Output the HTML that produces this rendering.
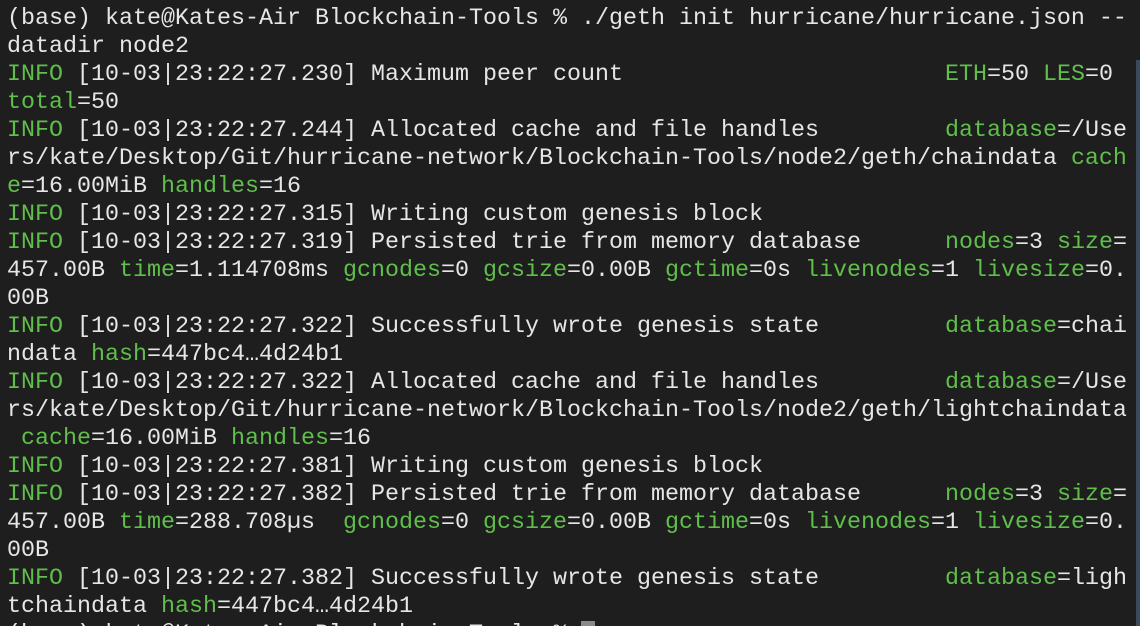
<!DOCTYPE html>
<html><head><meta charset="utf-8"><style>
html,body{margin:0;padding:0;background:#1e1e1e;width:1140px;height:626px;overflow:hidden;position:relative}
pre{margin:0;position:absolute;left:7px;top:5px;font-family:"Liberation Mono",monospace;font-size:23.33px;line-height:28px;color:#e6e6e6;white-space:pre}
.g{color:#5fbf4a}
.bar{position:absolute;left:1136px;top:60px;width:4px;height:566px;background:#3a4a5a}
.cur{display:inline-block;width:14px;height:24px;background:#8a8a8a;vertical-align:top}
</style></head><body>
<div class="bar"></div>
<pre>(base) kate@Kates-Air Blockchain-Tools % ./geth init hurricane/hurricane.json --
datadir node2
<span class="g">INFO</span> [10-03|23:22:27.230] Maximum peer count                       <span class="g">ETH</span>=50 <span class="g">LES</span>=0
<span class="g">total</span>=50
<span class="g">INFO</span> [10-03|23:22:27.244] Allocated cache and file handles         <span class="g">database</span>=/Use
rs/kate/Desktop/Git/hurricane-network/Blockchain-Tools/node2/geth/chaindata <span class="g">cach</span>
<span class="g">e</span>=16.00MiB <span class="g">handles</span>=16
<span class="g">INFO</span> [10-03|23:22:27.315] Writing custom genesis block
<span class="g">INFO</span> [10-03|23:22:27.319] Persisted trie from memory database      <span class="g">nodes</span>=3 <span class="g">size</span>=
457.00B <span class="g">time</span>=1.114708ms <span class="g">gcnodes</span>=0 <span class="g">gcsize</span>=0.00B <span class="g">gctime</span>=0s <span class="g">livenodes</span>=1 <span class="g">livesize</span>=0.
00B
<span class="g">INFO</span> [10-03|23:22:27.322] Successfully wrote genesis state         <span class="g">database</span>=chai
ndata <span class="g">hash</span>=447bc4…4d24b1
<span class="g">INFO</span> [10-03|23:22:27.322] Allocated cache and file handles         <span class="g">database</span>=/Use
rs/kate/Desktop/Git/hurricane-network/Blockchain-Tools/node2/geth/lightchaindata
 <span class="g">cache</span>=16.00MiB <span class="g">handles</span>=16
<span class="g">INFO</span> [10-03|23:22:27.381] Writing custom genesis block
<span class="g">INFO</span> [10-03|23:22:27.382] Persisted trie from memory database      <span class="g">nodes</span>=3 <span class="g">size</span>=
457.00B <span class="g">time</span>=288.708µs  <span class="g">gcnodes</span>=0 <span class="g">gcsize</span>=0.00B <span class="g">gctime</span>=0s <span class="g">livenodes</span>=1 <span class="g">livesize</span>=0.
00B
<span class="g">INFO</span> [10-03|23:22:27.382] Successfully wrote genesis state         <span class="g">database</span>=ligh
tchaindata <span class="g">hash</span>=447bc4…4d24b1
(base) kate@Kates-Air Blockchain-Tools % <span class="cur"></span></pre>
</body></html>
